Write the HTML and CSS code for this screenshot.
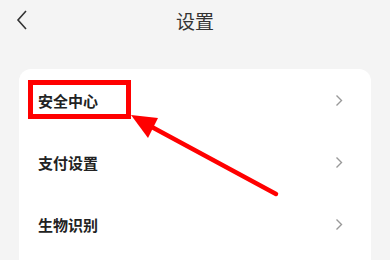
FILE: index.html
```html
<!DOCTYPE html>
<html lang="zh">
<head>
<meta charset="utf-8">
<link rel="stylesheet" href="styles.css">
</head>
<body>
<div class="page">
  <header class="nav">
    <svg class="back" width="12" height="20" viewBox="0 0 12 20"><path d="M10 1 L2 10 L10 19" fill="none" stroke="#333" stroke-width="1.6"/></svg>
    <h1 class="title">设置</h1>
  </header>
  <section class="card">
    <div class="row"><span class="label">安全中心</span><svg class="chev" width="8" height="13" viewBox="0 0 8 13"><path d="M1.5 1.5 L6.5 6.5 L1.5 11.5" fill="none" stroke="#999" stroke-width="1.4"/></svg></div>
    <div class="row"><span class="label">支付设置</span><svg class="chev" width="8" height="13" viewBox="0 0 8 13"><path d="M1.5 1.5 L6.5 6.5 L1.5 11.5" fill="none" stroke="#999" stroke-width="1.4"/></svg></div>
    <div class="row"><span class="label">生物识别</span><svg class="chev" width="8" height="13" viewBox="0 0 8 13"><path d="M1.5 1.5 L6.5 6.5 L1.5 11.5" fill="none" stroke="#999" stroke-width="1.4"/></svg></div>
  </section>
  <svg class="annot" width="390" height="260" viewBox="0 0 390 260">
    <rect x="30.5" y="82.5" width="98" height="34" fill="none" stroke="#f00" stroke-width="5"/>
    <line x1="150" y1="126" x2="276" y2="194" stroke="#f00" stroke-width="4.5" stroke-linecap="round"/>
    <polygon points="131,115 158,118 148,138" fill="#f00"/>
  </svg>
</div>
</body>
</html>
```
FILE: styles.css
```css
* { box-sizing: border-box; }
html, body { margin: 0; padding: 0; }
body {
  background: #f4f4f4;
  font-family: "Noto Sans CJK SC", "Noto Sans", sans-serif;
  width: 390px;
  height: 260px;
  overflow: hidden;
}
.page { position: relative; width: 390px; height: 260px; }
.nav {
  height: 69px;
  display: flex;
  align-items: flex-start;
  justify-content: center;
  position: relative;
}
.back { position: absolute; left: 16px; top: 10px; }
.title {
  margin: 8px 0 0;
  font-size: 19px;
  font-weight: 400;
  color: #333;
  line-height: 26px;
}
.card {
  margin: 0 19px 0 19px;
  background: #fff;
  border-radius: 12px 12px 0 0;
  height: 200px;
}
.row {
  height: 62px;
  display: flex;
  align-items: center;
  justify-content: space-between;
  padding: 0 28px 0 19px;
}
.label {
  font-size: 15px;
  font-weight: 700;
  color: #222;
}
.annot { position: absolute; left: 0; top: 0; }
```
